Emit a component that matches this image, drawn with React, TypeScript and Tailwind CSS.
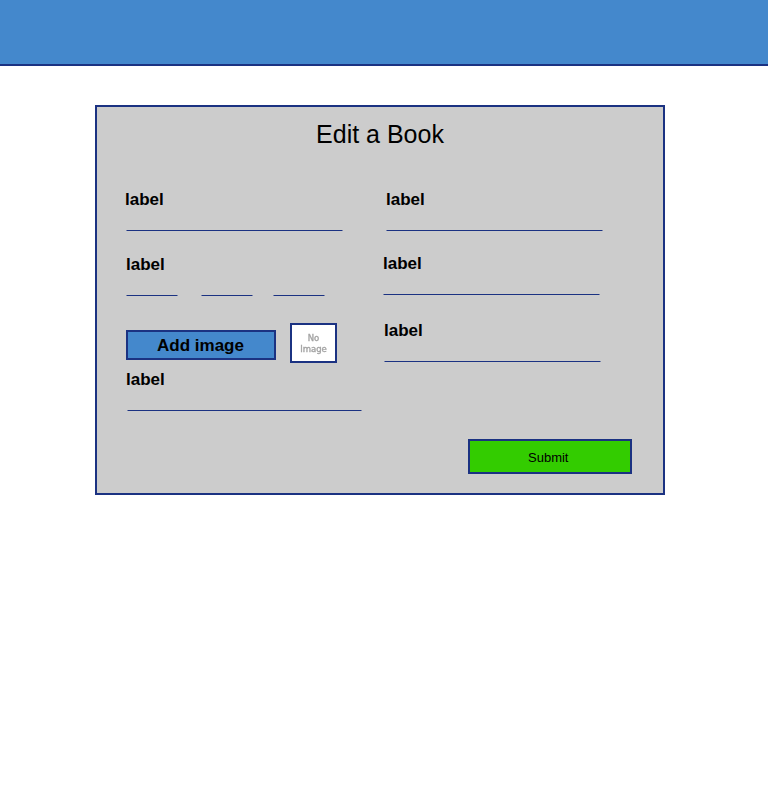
type FieldProps = {
  className?: string;
  labelClass?: string;
  lines: string[];
};

function Field({ className = '', labelClass = '', lines }: FieldProps) {
  return (
    <div className={`flex h-[42px] flex-col justify-between ${className}`}>
      <label className={`pt-px text-[17px] leading-5 font-bold ${labelClass}`}>label</label>
      <div className="flex">
        {lines.map((line, i) => (
          <div key={i} className={`h-px border-x border-[#7480a7] bg-[#1b3282] ${line}`} />
        ))}
      </div>
    </div>
  );
}

export default function App() {
  return (
    <div className="min-h-screen bg-white font-['Liberation_Sans',Arial,sans-serif] text-black">
      <header className="h-[66px] border-b-2 border-[#1b3282] bg-[#4488cc]" />
      <main className="mt-[39px] ml-[95px] h-[390px] w-[570px] border-2 border-[#1b3282] bg-[#cccccc] pt-[13px]">
        <h1 className="text-center text-[25px] leading-7">Edit a Book</h1>
        <form className="mt-[41px] flex" onSubmit={(e) => e.preventDefault()}>
          <div className="ml-[29px] flex w-[256px] flex-col">
            <Field labelClass="-ml-px" lines={['w-[217px]']} />
            <Field
              className="mt-[23px]"
              lines={['w-[52px]', 'ml-[23px] w-[52px]', 'ml-[20px] w-[52px]']}
            />
            <div className="mt-[27px] flex items-start gap-[14px]">
              <button
                type="button"
                className="mt-[7px] h-[30px] w-[150px] border-2 border-[#1b3282] bg-[#4488cc] pt-0.5 pr-px text-[17px] leading-6 font-bold"
              >
                Add image
              </button>
              <div className="flex h-10 w-[47px] flex-col items-center justify-center border-2 border-[#1b3282] bg-white pt-px font-['DejaVu_Sans',sans-serif] text-[8.5px] leading-[10.5px] text-[#a3a3a3] will-change-transform [-webkit-text-stroke:0.35px_#a3a3a3]">
                <span>No</span>
                <span>Image</span>
              </div>
            </div>
            <Field className="mt-[6px] ml-px" labelClass="-ml-px" lines={['w-[235px]']} />
          </div>
          <div className="flex w-[250px] flex-col">
            <Field className="ml-1" lines={['w-[217px]']} />
            <Field className="mt-[22px] ml-px" lines={['w-[217px]']} />
            <Field className="mt-[25px] ml-0.5" lines={['w-[217px]']} />
            <button
              type="submit"
              className="mt-[77px] ml-[86px] h-[35px] w-[164px] border-2 border-[#1b3282] bg-[#33cc00] pt-0.5 pr-[3.5px] text-[13px] leading-[29px]"
            >
              Submit
            </button>
          </div>
        </form>
      </main>
    </div>
  );
}
